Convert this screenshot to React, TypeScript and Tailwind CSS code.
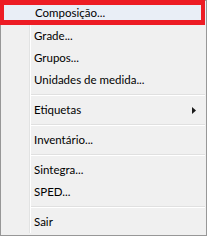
type TMenuEntry =
  | { kind: 'item'; label: string; submenu?: boolean; active?: boolean }
  | { kind: 'sep' }

const ENTRIES: TMenuEntry[] = [
  { kind: 'item', label: 'Composição...', active: true },
  { kind: 'item', label: 'Grade...' },
  { kind: 'item', label: 'Grupos...' },
  { kind: 'item', label: 'Unidades de medida...' },
  { kind: 'sep' },
  { kind: 'item', label: 'Etiquetas', submenu: true },
  { kind: 'sep' },
  { kind: 'item', label: 'Inventário...' },
  { kind: 'sep' },
  { kind: 'item', label: 'Sintegra...' },
  { kind: 'item', label: 'SPED...' },
  { kind: 'sep' },
  { kind: 'item', label: 'Sair' }
]

const SubmenuArrow = () => (
  <svg width="4" height="7" viewBox="0 0 4 7" className="block">
    <path d="M0 0 L4 3.5 L0 7 Z" fill="#1a1a1a" />
  </svg>
)

export default function App() {
  return (
    <div className="relative w-[207px] h-[236px] bg-[#f0f0f0] border border-[#979797] font-['Segoe_UI',Lato,sans-serif] text-[11.5px] text-black">
      <div className="flex h-full py-[2px]">
        <div className="w-[29px] flex-shrink-0 border-r border-[#e2e3e3]" />
        <div className="flex-1 flex flex-col border-l border-white">
          {ENTRIES.map((entry, i) =>
            entry.kind === 'sep' ? (
              <div key={i} className="h-[8px] pt-[3px] pr-[1px]">
                <div className="h-px bg-[#e0e0e0]" />
                <div className="h-px bg-white" />
              </div>
            ) : (
              <div
                key={i}
                className={`h-[22px] flex items-center pl-[3px] pr-[10px] ${
                  entry.active ? 'bg-[#e9eef6]' : ''
                }`}
              >
                <span className="leading-none">{entry.label}</span>
                {entry.submenu && (
                  <span className="ml-auto">
                    <SubmenuArrow />
                  </span>
                )}
              </div>
            )
          )}
        </div>
      </div>

      {/* red annotation box drawn over the hovered item */}
      <div className="absolute -left-px -top-px w-[205px] h-[25px] border-x-[4px] border-y-[5px] border-[#ed1c24] bg-[#e9eef6]" />
      <div className="absolute left-[34px] top-[1px] h-[22px] flex items-center">
        <span className="leading-none">Composição...</span>
      </div>
    </div>
  )
}
